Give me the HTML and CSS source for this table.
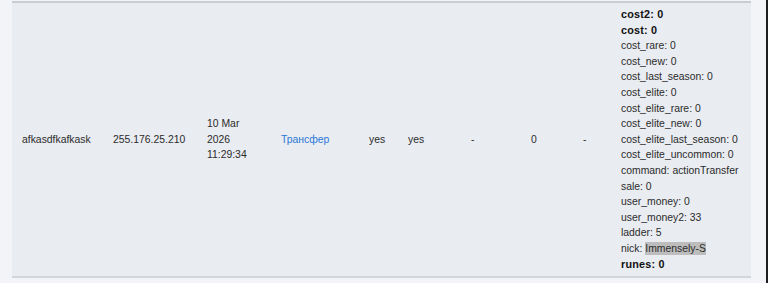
FILE: index.html
```html
<!DOCTYPE html>
<html>
<head>
<meta charset="utf-8">
<link rel="stylesheet" href="styles.css">
</head>
<body>
<div class="page">
  <table class="log">
    <colgroup>
      <col class="c1"><col class="c2"><col class="c3"><col class="c4"><col class="c5">
      <col class="c6"><col class="c7"><col class="c8"><col class="c9"><col class="c10">
    </colgroup>
    <tbody>
      <tr>
        <td>afkasdfkafkask</td>
        <td>255.176.25.210</td>
        <td>10 Mar<br>2026<br>11:29:34</td>
        <td><a class="link" href="#">Трансфер</a></td>
        <td>yes</td>
        <td>yes</td>
        <td>-</td>
        <td>0</td>
        <td>-</td>
        <td class="params">
          <div class="b">cost2: 0</div>
          <div class="b">cost: 0</div>
          <div>cost_rare: 0</div>
          <div>cost_new: 0</div>
          <div>cost_last_season: 0</div>
          <div>cost_elite: 0</div>
          <div>cost_elite_rare: 0</div>
          <div>cost_elite_new: 0</div>
          <div>cost_elite_last_season: 0</div>
          <div>cost_elite_uncommon: 0</div>
          <div>command: actionTransfer</div>
          <div>sale: 0</div>
          <div>user_money: 0</div>
          <div>user_money2: 33</div>
          <div>ladder: 5</div>
          <div>nick: <span class="hl">Immensely-S</span></div>
          <div class="b">runes: 0</div>
        </td>
      </tr>
    </tbody>
  </table>
</div>
</body>
</html>
```
FILE: styles.css
```css
html, body {
  margin: 0;
  padding: 0;
  background: #f3f4f8;
}
body {
  font-family: "Liberation Sans", Arial, sans-serif;
  font-size: 10.4px;
  line-height: 15.6px;
  color: #2b2b2b;
}
.page {
  width: 768px;
  height: 283px;
  box-sizing: border-box;
  padding: 1px 0 0 12px;
  border-right: 2px solid #1e1e1e;
}
.log {
  width: 739px;
  table-layout: fixed;
  border-collapse: collapse;
  background: #e9ecf1;
}
.log td {
  border-top: 2px solid #c9ccd1;
  border-bottom: 2px solid #d3d6db;
  padding: 4px 0 4px 10px;
  vertical-align: middle;
  text-align: left;
  white-space: nowrap;
}
.c1 { width: 91px; }
.c2 { width: 94px; }
.c3 { width: 74px; }
.c4 { width: 88px; }
.c5 { width: 39px; }
.c6 { width: 63px; }
.c7 { width: 60px; }
.c8 { width: 52px; }
.c9 { width: 38px; }
.c10 { width: 140px; }
.link {
  color: #2a78d6;
  text-decoration: none;
}
.b {
  font-weight: bold;
  font-size: 10.8px;
  letter-spacing: 0.2px;
  color: #111;
}
.hl {
  background: #bdbdbd;
  padding: 1px 0;
}
```
